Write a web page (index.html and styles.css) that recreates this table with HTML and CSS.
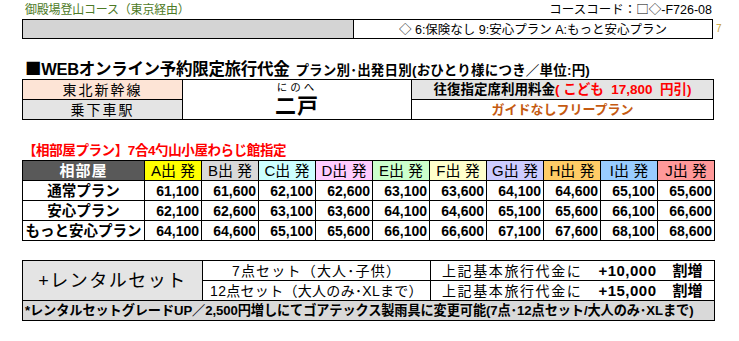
FILE: index.html
```html
<!DOCTYPE html>
<html lang="ja">
<head>
<meta charset="utf-8">
<link rel="stylesheet" href="styles.css">
</head>
<body>
<div class="page">
  <div class="head">
    <span class="course">御殿場登山コース（東京経由）</span>
    <span class="code">コースコード：<span class="cjk">□◇</span>-F726-08</span>
  </div>
  <div class="barrow">
    <div class="bar">
      <div class="bar-gray"></div>
      <div class="bar-white"><span class="cjk">◇</span> 6:保険なし 9:安心プラン A:もっと安心プラン</div>
    </div>
    <span class="seven">7</span>
  </div>

  <div class="title"><span class="title-main"><span class="cjk">■</span>WEBオンライン予約限定旅行代金</span><span class="title-sub">プラン別･出発日別(おひとり様につき／単位:円)</span></div>

  <table class="t1">
    <colgroup><col class="c1a"><col class="c1b"><col class="c1c"></colgroup>
    <tr>
      <td class="line">東北新幹線</td>
      <td class="station" rowspan="2"><div class="ruby">にのへ</div><div class="stname">二戸</div></td>
      <td class="fare">往復指定席利用料金<span class="red">( こども&nbsp; 17,800&nbsp; 円引)</span></td>
    </tr>
    <tr>
      <td class="getoff">乗下車駅</td>
      <td class="guide">ガイドなしフリープラン</td>
    </tr>
  </table>

  <div class="redhead">【相部屋プラン】7合4勺山小屋わらじ館指定</div>

  <table class="t2">
    <colgroup><col class="c2a"><col span="10" class="c2n"></colgroup>
    <tr class="hdr">
      <td class="room">相部屋</td>
      <td class="dA">A出 発</td>
      <td class="dB">B出 発</td>
      <td class="dC">C出 発</td>
      <td class="dD">D出 発</td>
      <td class="dE">E出 発</td>
      <td class="dF">F出 発</td>
      <td class="dG">G出 発</td>
      <td class="dH">H出 発</td>
      <td class="dI">I出 発</td>
      <td class="dJ">J出 発</td>
    </tr>
    <tr>
      <td class="plan">通常プラン</td>
      <td class="num">61,100</td><td class="num">61,600</td><td class="num">62,100</td><td class="num">62,600</td><td class="num">63,100</td><td class="num">63,600</td><td class="num">64,100</td><td class="num">64,600</td><td class="num">65,100</td><td class="num">65,600</td>
    </tr>
    <tr>
      <td class="plan">安心プラン</td>
      <td class="num">62,100</td><td class="num">62,600</td><td class="num">63,100</td><td class="num">63,600</td><td class="num">64,100</td><td class="num">64,600</td><td class="num">65,100</td><td class="num">65,600</td><td class="num">66,100</td><td class="num">66,600</td>
    </tr>
    <tr>
      <td class="plan">もっと安心プラン</td>
      <td class="num">64,100</td><td class="num">64,600</td><td class="num">65,100</td><td class="num">65,600</td><td class="num">66,100</td><td class="num">66,600</td><td class="num">67,100</td><td class="num">67,600</td><td class="num">68,100</td><td class="num">68,600</td>
    </tr>
  </table>

  <table class="t3">
    <colgroup><col class="c3a"><col class="c3b"><col class="c3c"></colgroup>
    <tr>
      <td class="rental" rowspan="2">+レンタルセット</td>
      <td class="set">7点セット（大人･子供）</td>
      <td class="add"><span class="kihon">上記基本旅行代金に</span><b class="plus">+10,000</b><b class="wari">割増</b></td>
    </tr>
    <tr>
      <td class="set set12">12点セット（大人のみ･XLまで）</td>
      <td class="add"><span class="kihon">上記基本旅行代金に</span><b class="plus">+15,000</b><b class="wari">割増</b></td>
    </tr>
    <tr>
      <td class="note" colspan="3">*レンタルセットグレードUP／2,500円増しにてゴアテックス製雨具に変更可能(7点･12点セット/大人のみ･XLまで)</td>
    </tr>
  </table>
</div>
</body>
</html>
```

FILE: styles.css
```css
html, body {
  margin: 0;
  padding: 0;
  background: #ffffff;
}
body {
  font-family: "Liberation Sans", "Noto Sans CJK JP", sans-serif;
  color: #000;
}
.cjk {
  font-family: "Noto Sans CJK JP", sans-serif;
}
.page {
  padding-left: 22px;
  width: 700px;
}
.head {
  display: flex;
  justify-content: space-between;
  align-items: flex-end;
  height: 19px;
  width: 691px;
}
.course {
  color: #4d7a26;
  font-size: 12px;
  line-height: 16px;
  padding-left: 3px;
  letter-spacing: -0.2px;
  padding-bottom: 1px;
}
.code {
  font-size: 12.5px;
  line-height: 16px;
  padding-right: 1px;
  letter-spacing: 0;
  padding-bottom: 1px;
}
.barrow {
  display: flex;
  align-items: center;
}
.bar {
  display: flex;
  width: 691px;
  height: 20px;
  box-sizing: border-box;
  border: 1px solid #000;
}
.bar-gray {
  width: 330px;
  background: #d4d4d4;
  border-right: 1px solid #000;
}
.bar-white {
  flex: 1;
  text-align: center;
  font-size: 12.5px;
  line-height: 18px;
  letter-spacing: 0;
}
.seven {
  color: #c8a032;
  font-size: 10px;
  padding-left: 3px;
  line-height: 12px;
}
.title {
  margin-top: 19px;
  height: 20px;
  line-height: 20px;
  margin-bottom: 1px;
  font-weight: bold;
  white-space: nowrap;
}
.title-main {
  font-size: 16.5px;
  padding-left: 3px;
  letter-spacing: -0.3px;
}
.title-sub {
  font-size: 13.5px;
  padding-left: 6px;
  letter-spacing: 0.2px;
}
table {
  border-collapse: collapse;
  table-layout: fixed;
}
td {
  border: 1px solid #000;
  padding: 0;
  height: 19px;
  line-height: 18px;
  white-space: nowrap;
  overflow: hidden;
}
.t1 { width: 691px; }
.c1a { width: 160px; }
.c1b { width: 229px; }
.c1c { width: 302px; }
.line {
  background: #fde4d6;
  text-align: center;
  font-size: 14px;
  letter-spacing: 2px;
}
.getoff {
  background: #e4e4e4;
  text-align: center;
  font-size: 14px;
  letter-spacing: 2px;
}
.station {
  text-align: center;
  vertical-align: top;
}
.ruby {
  font-size: 10.5px;
  line-height: 12px;
  letter-spacing: 3px;
  padding-top: 1px;
}
.stname {
  font-size: 21px;
  font-weight: bold;
  line-height: 25px;
  letter-spacing: 1px;
}
.fare {
  background: #e4e4e4;
  text-align: center;
  font-weight: bold;
  font-size: 13.5px;
}
.red { color: #ff0000; }
.guide {
  text-align: center;
  color: #c55a11;
  font-weight: bold;
  font-size: 13px;
}
.redhead {
  margin-top: 22px;
  height: 18px;
  line-height: 18px;
  color: #ff0000;
  font-weight: bold;
  font-size: 13.5px;
  padding-left: 1px;
  letter-spacing: -0.4px;
}
.t2 { width: 692px; }
.c2a { width: 122px; }
.c2n { width: 57px; }
.hdr td {
  text-align: center;
  font-size: 15px;
  letter-spacing: 0px;
}
.hdr .room {
  background: #595959;
  color: #fff;
  font-weight: bold;
  letter-spacing: 1px;
}
.dA { background: #ffff00; }
.dB { background: #d9d9d9; }
.dC { background: #ccffff; }
.dD { background: #ffccff; }
.dE { background: #ccffcc; }
.dF { background: #ffffcc; }
.dG { background: #ccccff; }
.dH { background: #ffcc66; }
.dI { background: #99ccff; }
.dJ { background: #ff9999; }
.plan {
  text-align: center;
  font-weight: bold;
  font-size: 14.5px;
}
.num {
  text-align: right;
  font-weight: bold;
  font-size: 14px;
  padding-right: 2px;
}
.t3 {
  width: 692px;
  margin-top: 19px;
}
.c3a { width: 180px; }
.c3b { width: 228px; }
.c3c { width: 284px; }
.rental {
  background: #e4e4e4;
  text-align: center;
  font-size: 18px;
  letter-spacing: 1.5px;
}
.set {
  text-align: center;
  font-size: 14px;
  letter-spacing: 1.2px;
}
.set12 {
  letter-spacing: 0.3px;
}
.add {
  font-size: 14px;
  padding-left: 11px;
}
.kihon {
  letter-spacing: 1.6px;
}
.plus {
  font-size: 15px;
  padding-left: 16px;
  letter-spacing: 0.5px;
}
.wari {
  font-size: 15px;
  padding-left: 16px;
}
.note {
  background: #d9d9d9;
  font-weight: bold;
  font-size: 13.2px;
  padding-left: 2px;
  letter-spacing: -0.1px;
}
```
